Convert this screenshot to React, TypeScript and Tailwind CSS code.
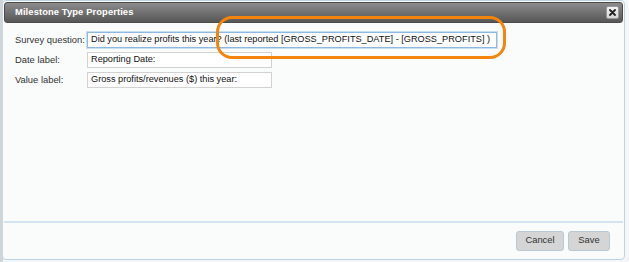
import React from 'react';

const font = { fontFamily: '"Liberation Sans", Arial, sans-serif' };

function Row({ label, value, wide, focused }: { label: string; value: string; wide?: boolean; focused?: boolean }) {
    return (
        <div className="flex items-center h-[20px]">
            <div className="w-[72px] shrink-0 whitespace-nowrap text-[9.4px] text-[#333]">{label}</div>
            <div
                className={`${wide ? 'w-[410px]' : 'w-[185px]'} h-[16px] bg-white flex items-center px-[3px] text-[9.2px] text-[#111] whitespace-nowrap overflow-hidden ${focused
                    ? 'border border-[#8fb8e0] shadow-[0_0_0_1px_#c9def2]'
                    : 'border border-[#d2d2d2]'}`}
            >
                {value}
            </div>
        </div>
    );
}

export default function App() {
    return (
        <div className="relative w-[629px] h-[262px] bg-[#f4f6f7] overflow-hidden" style={font}>
            <div className="absolute left-0 top-0 w-[3px] h-full bg-[#cfd6db]" />
            <div className="ml-[2px] w-[623px] h-[260px] border border-[#bcd3e6] rounded-[4px] bg-[#fafcfc] flex flex-col p-[1px]">
                {/* title bar */}
                <div className="h-[21px] shrink-0 rounded-[3px] border border-[#4b4b4b] bg-gradient-to-b from-[#8c8c8c] to-[#575757] flex items-center justify-between pl-[10px] pr-[3px]">
                    <span className="text-[9.4px] font-bold text-white tracking-[0.1px]">Milestone Type Properties</span>
                    <div className="w-[13px] h-[13px] rounded-[2px] bg-gradient-to-b from-[#f4f4f4] to-[#d6d6d6] border border-[#9a9a9a] flex items-center justify-center">
                        <svg width="7" height="7" viewBox="0 0 7 7">
                            <path d="M1 1 L6 6 M6 1 L1 6" stroke="#222" strokeWidth="1.8" strokeLinecap="round" />
                        </svg>
                    </div>
                </div>

                {/* form */}
                <div className="flex-1 pl-[11px] pt-[7px] flex flex-col">
                    <Row
                        label="Survey question:"
                        value="Did you realize profits this year? (last reported [GROSS_PROFITS_DATE] - [GROSS_PROFITS] )"
                        wide
                        focused
                    />
                    <Row label="Date label:" value="Reporting Date:" />
                    <Row label="Value label:" value="Gross profits/revenues ($) this year:" />
                </div>

                {/* footer */}
                <div className="h-[37px] shrink-0 border-t-2 border-[#d3e3ef] flex items-center justify-end gap-[4px] pr-[13px]">
                    <button className="w-[48px] h-[20px] rounded-[3px] border border-[#b8c8d6] bg-[#d5d5d5] text-[9.4px] text-[#333]">Cancel</button>
                    <button className="w-[42px] h-[20px] rounded-[3px] border border-[#b8c8d6] bg-[#d5d5d5] text-[9.4px] text-[#333]">Save</button>
                </div>
            </div>

            {/* annotation */}
            <div className="absolute left-[216px] top-[16px] w-[290px] h-[43px] rounded-[16px] border-[3px] border-[#f5840c]" />
        </div>
    );
}
